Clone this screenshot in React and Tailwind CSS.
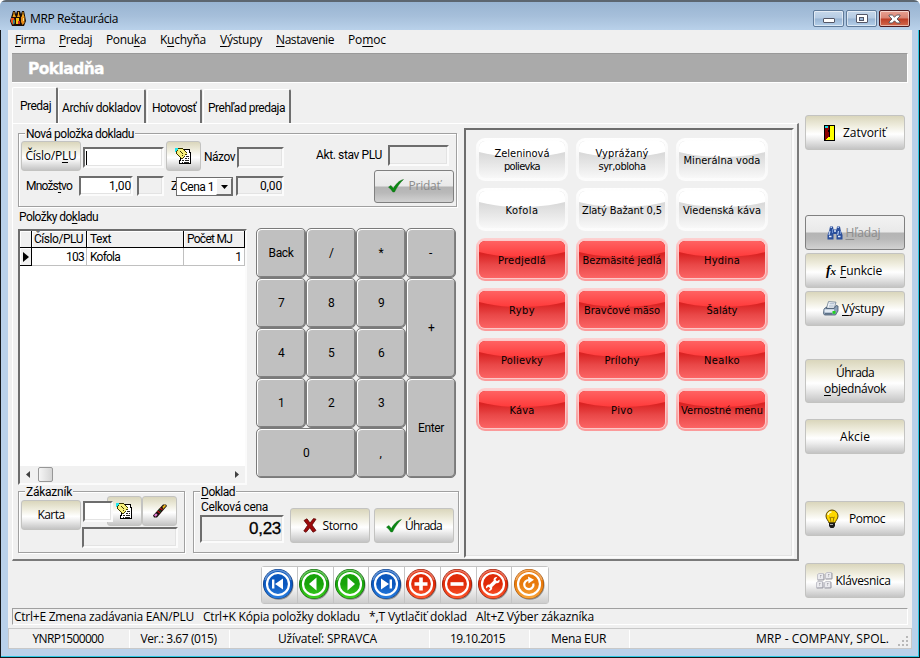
import { useLayoutEffect, useRef, useState } from "react";

// Label with a fixed width, "&" marks the accelerator letter
function Label({ text, w, className = "" }) {
  const ref = useRef(null);
  const [spacing, setSpacing] = useState(0);
  const plain = text.replace("&", "");
  const at = text.indexOf("&");

  useLayoutEffect(() => {
    const natural = ref.current.getBoundingClientRect().width;
    setSpacing((w - natural) / plain.length);
  }, []);

  return (
    <span className={`inline-block shrink-0 whitespace-pre ${className}`} style={{ width: w }}>
      <span ref={ref} className="inline-block" style={{ letterSpacing: spacing }}>
        {at < 0 ? (
          plain
        ) : (
          <>
            {plain.slice(0, at)}
            <span className="underline underline-offset-2">{plain[at]}</span>
            {plain.slice(at + 1)}
          </>
        )}
      </span>
    </span>
  );
}

const SANS = "font-['Roboto','Liberation_Sans',sans-serif] text-[12px] leading-[14px]";

function Button({ children, disabled, className = "" }) {
  const look = disabled
    ? "border-[#808080] text-[#8c8c8c] bg-[linear-gradient(#f2f2f2_0%,#e9e9e9_49%,#b4b4b4_51%,#b9b9b9_70%,#d2d2d2_100%)]"
    : "border-[#c3c3c1] text-black bg-[linear-gradient(#dad6bc_0%,#efedde_30%,#ffffff_55%,#f0f0f0_68%,#c4c4c4_100%)]";
  return (
    <button className={`flex shrink-0 items-center justify-center rounded-[3px] border ${look} ${className}`}>
      {children}
    </button>
  );
}

function Field({ children, white, className = "" }) {
  return (
    <div
      className={`flex shrink-0 items-center justify-end border-2 border-t-[#6d6d6d] border-l-[#6d6d6d] border-r-[#fbfbfb] border-b-[#fbfbfb] shadow-[inset_-1px_-1px_0_#e3e3e3] ${white ? "bg-white" : "bg-[#f0f0f0]"} ${SANS} ${className}`}
    >
      {children}
    </div>
  );
}

function Group({ title, w, className = "", children }) {
  return (
    <div className={`relative border border-[#a0a0a0] shadow-[1px_1px_0_#fff,inset_1px_1px_0_#fff] ${className}`}>
      <div className={`absolute -top-[7px] left-[6px] flex bg-[#f0f0f0] px-px ${SANS}`}>
        <Label text={title} w={w} />
      </div>
      {children}
    </div>
  );
}

/* ---------- icons ---------- */

function AppIcon() {
  return (
    <svg width="16" height="17" viewBox="0 0 16 17" className="shrink-0">
      <path d="M2 4.500L3 1h2l1 3 1-3h3l1 3 1-3h2l.8 3.500L16 11l-2 5H2L0 11z" fill="#1a0c04" />
      <path d="M3.500 2h1v2l1.500 3H2.500L3.500 4zM8 2h1v2l1 3H7l1-3zM12.500 2h1v2l1 3h-3l1-3z" fill="#f3a51d" />
      <path d="M1 8h3l1 4-2 3-2-3z" fill="#e8501a" />
      <path d="M6 8h3v6H6z" fill="#f6c112" />
      <path d="M11 7h3.500v6l-2 2-1.500-3z" fill="#e78b17" />
      <path d="M3 10h1.500v4H3z" fill="#2f9a8b" />
      <path d="M8 11h2v3H8z" fill="#c8282a" />
      <path d="M13 8h1v3h-1z" fill="#ffe27a" />
    </svg>
  );
}

function NotesIcon() {
  return (
    <svg width="17" height="17" viewBox="0 0 17 17" shapeRendering="crispEdges">
      <path d="M5.500 1.500h9v3h1v11h-11v-3h1z" fill="#fff" stroke="#000" />
      <path d="M0 0h4v1H3v1H2v1H1v1H0z" fill="#1ee6ee" />
      <path d="M3 1h5v1h1v1h1v1h1v1h1v2h-2v1H9v1H8v1H6V9H5V8H4V7H3V6H2V3h1z" fill="#f7f07a" />
      <path d="M3 0h5v1H3zM8 1h1v1H8zM9 2h1v1H9zM10 3h1v1h-1zM11 4h1v1h-1zM2 2h1v1H2zM1 3h1v3H1zM2 6h1v1H2zM3 7h1v1H3zM4 8h1v1H4zM5 9h1v1H5zM6 10h2v1H6zM8 9h1v1H8zM9 8h1v1H9zM10 6h2v1h-2zM5 3h1v1H5zM6 4h1v1H6zM7 5h1v1H7zM7 7h1v1H7z" fill="#3b3700" />
      <path d="M11 8h3v1h-3zM10 10h2v1h-2zM13 10h1v1h-1zM7 12h2v1H7zM10 12h4v1h-4zM7 14h1v1H7zM9 14h5v1H9z" transform="translate(0 -.5)" fill="#222" />
    </svg>
  );
}

function EraserIcon() {
  return (
    <svg width="16" height="16" viewBox="0 0 16 16">
      <path d="M1 12.500L11 1.500h3l1 1.500L5 14.500H2z" fill="#1a0f0c" />
      <path d="M10.500 3.500l2.500-2 1 1.500-3 3z" fill="#e8b21a" />
      <path d="M8 5l2.500 2M5.500 8l2.500 2" stroke="#b01818" strokeWidth="1.400" />
      <path d="M6.800 6.500L9 8.500" stroke="#19762c" />
      <path d="M2 12.200l2-2 1.600 1.600-2 2z" fill="#e77bd9" />
    </svg>
  );
}

function CheckIcon() {
  return (
    <svg width="16" height="14" viewBox="0 0 16 14">
      <path d="M.5 8L3 6.500l2.300 3C8 5 11 1.500 15.500.5 12 3.500 9 8 6.500 13H4.800C3.500 11 2.200 9.500.5 8z" fill="#0a8a12" stroke="#055a0a" strokeWidth=".4" />
    </svg>
  );
}

function CrossIcon() {
  return (
    <svg width="14" height="15" viewBox="0 0 14 15">
      <path d="M1 2.500L4 .8l3 4.200L10.500.6 13 1.200 9 7l4 5.500-3 1.700-3.200-4.500L3 14.300.8 13l3.900-5.800z" fill="#9d0b0b" stroke="#5d0404" strokeWidth=".8" />
    </svg>
  );
}

function DoorIcon() {
  return (
    <svg width="11" height="16" viewBox="0 0 11 16" shapeRendering="crispEdges">
      <rect x=".5" y=".5" width="10" height="15" fill="#ffff00" stroke="#000" />
      <path d="M1 1h4v11l-2 1-1 2H1z" fill="#8b0000" />
      <path d="M1 1h3v2H1z" fill="#16dbe6" />
      <path d="M5 1h1v11H5zM4 5h1v2H4z" fill="#000" />
      <path d="M3 13h2v2H3z" fill="#ffff00" />
    </svg>
  );
}

function BinocularsIcon() {
  return (
    <svg width="16" height="14" viewBox="0 0 16 14">
      <path d="M3 .5h3l.5 3h3l.5-3h3l.8 4L15.500 9v4.500H9.500V8h-3v5.500H.5V9l1.700-4.500z" fill="#2b4f9b" />
      <path d="M3.500 1.500h1.500M10.500 1.500H12M3 5l-1 4M11.500 5l-.8 4" stroke="#b8cdf3" strokeWidth="1.200" />
      <path d="M2 10.500h2.500M11 10.500h2.500M7 5h2" stroke="#e6eefc" strokeWidth="1.600" />
      <path d="M5.500 3v4M13.500 5v3" stroke="#6d8fd0" />
    </svg>
  );
}

function PrinterIcon() {
  return (
    <svg width="16" height="15" viewBox="0 0 16 15">
      <path d="M5.500.6l7.500.6-1.800 6H3.500z" fill="#fbfdff" stroke="#64788d" strokeWidth=".8" />
      <path d="M6.500 2.800h5M5.800 5h5" stroke="#7f97b0" strokeWidth=".8" />
      <path d="M1 8l2.500-2v1.500h7.700L13 4.500l2 .5v5l-2.500 4h-11L.5 12.500z" fill="#8ba0b8" stroke="#44586f" strokeWidth=".8" />
      <path d="M1.500 8.300h9.500v3.200H1.500z" fill="#e3ebf3" />
      <path d="M9.500 10h3v2.800h-3z" fill="#1fd51f" />
      <path d="M2 12.800h7" stroke="#4b5e74" />
    </svg>
  );
}

function BulbIcon() {
  return (
    <svg width="14" height="20" viewBox="0 0 14 20">
      <path d="M7 1a6 6 0 0 0-6 6c0 3 2.500 4.500 3 7h6c.5-2.500 3-4 3-7a6 6 0 0 0-6-6z" fill="#ffd800" stroke="#5a4500" />
      <path d="M3 6c.3-2 2-3 3.500-3" stroke="#fffbd0" strokeWidth="1.500" fill="none" />
      <path d="M5 8l1 5M9 8l-1 5M4.500 8l1.200 1L7 8l1.300 1L9.500 8" stroke="#8a6a00" fill="none" strokeWidth=".8" />
      <path d="M4 13.500h6V17l-1.500 2h-3L4 17z" fill="#1c1c1c" />
      <path d="M5 15.500h3" stroke="#a9a9a9" />
    </svg>
  );
}

function KeysIcon() {
  return (
    <svg width="17" height="17" viewBox="0 0 17 17">
      {[[1, 1], [9, 0], [0, 9], [8, 9]].map(([x, y]) => (
        <g key={`${x}-${y}`} transform={`translate(${x} ${y})`}>
          <path d="M.5 1.500L2 .5h4.500L7 6.500l-6.500.6z" fill="#eaeaee" stroke="#b9b9c2" strokeWidth=".8" />
          <path d="M7 1v6H1" stroke="#9696a0" fill="none" strokeWidth=".8" />
          <path d="M3 2.500h1.500M3 4h1" stroke="#8c8c94" strokeWidth=".7" />
        </g>
      ))}
    </svg>
  );
}

const ROUND = {
  blue: ["#2a7fe0", "#0b57bd", "#07377e"],
  green: ["#3fcf1f", "#17a30a", "#0a5c05"],
  red: ["#ff5a30", "#e02a08", "#8a1604"],
  orange: ["#f9a63a", "#e8790a", "#a85204"],
};

function RoundIcon({ color, children }) {
  const [light, base, dark] = ROUND[color];
  return (
    <svg width="32" height="32" viewBox="0 0 32 32" className="mr-[2px] mb-[2px] shrink-0">
      <defs>
        <linearGradient id={`g-${color}`} x1="0" y1="0" x2="0" y2="1">
          <stop offset="0" stopColor={base} />
          <stop offset=".5" stopColor={base} />
          <stop offset="1" stopColor={light} />
        </linearGradient>
      </defs>
      <circle cx="16.800" cy="17" r="14.800" fill="#000" opacity=".35" />
      <circle cx="16" cy="16" r="15" fill={dark} />
      <circle cx="16" cy="16" r="14.400" fill={`url(#g-${color})`} />
      <path d="M3 12a13.500 13.500 0 0 1 26 0" fill="none" stroke="#fff" opacity=".35" strokeWidth="1.500" />
      <circle cx="16" cy="16" r="11" fill="none" stroke="#fff" strokeWidth="2.200" />
      {children}
    </svg>
  );
}

const TOOLBAR = [
  ["blue", <path d="M10 11.500h2.400v9H10zM21 10.500v11L13 16z" fill="#fff" />],
  ["green", <path d="M18.500 9.500v13L11 16z" fill="#fff" />],
  ["green", <path d="M13.500 9.500v13L21 16z" fill="#fff" />],
  ["blue", <path d="M19.600 11.500H22v9h-2.400zM11 10.500v11l8-5.500z" fill="#fff" />],
  ["red", <path d="M14.200 9.500h3.600v4.700h4.700v3.600h-4.700v4.700h-3.600v-4.700H9.500v-3.600h4.700z" fill="#fff" />],
  ["red", <path d="M9.500 14.200h13v3.600h-13z" fill="#fff" />],
  [
    "red",
    <path
      d="M22.500 11.500l-2.500 1.700-1.500-1.500L20.300 9c-2.300-.5-4.200 1.300-3.700 3.700l-3.900 3.900c-2.400-.4-4.200 1.500-3.700 3.800l2.600-1.700 1.600 1.600-1.700 2.500c2.300.5 4.200-1.400 3.700-3.700l3.900-3.900c2.400.5 4.200-1.400 3.400-3.700z"
      fill="#fff"
    />,
  ],
  [
    "orange",
    <>
      <path d="M20.300 15.500a4.600 4.600 0 1 1-4.500-3.500" fill="none" stroke="#fff" strokeWidth="2.200" />
      <path d="M15 8.500l6 3.200-5.500 3.800z" fill="#fff" />
    </>,
  ],
];

/* ---------- window chrome ---------- */

function TitleBar() {
  const box = "flex h-[17px] w-[31px] items-center justify-center rounded-[2px] border shadow-[inset_0_0_0_1px_#ffffff88]";
  const blue = "border-[#5f7a99] bg-[linear-gradient(#c6d7ea_0%,#b5cbe3_48%,#98b4d3_52%,#b5d0ea_100%)]";
  return (
    <div className="flex h-[30px] shrink-0 items-start border-t-2 border-[#5c6670] bg-[linear-gradient(#98b4d2,#a6bfda_50%,#b9d1ea)] pt-[8px] pr-[10px] pl-[10px]">
      <AppIcon />
      <Label text="MRP Reštaurácia" w={88} className="mt-px ml-[4px] text-[12px] leading-[16px]" />
      <div className="ml-auto flex gap-[2px]">
        <div className={`${box} ${blue}`}>
          <div className="mt-[4px] h-[5px] w-[12px] rounded-[1px] border border-[#535666] bg-white" />
        </div>
        <div className={`${box} ${blue}`}>
          <div className="flex h-[9px] w-[12px] items-center justify-center rounded-[1px] border border-[#535666] bg-white">
            <div className="h-[4px] w-[5px] border border-[#535666] bg-[#9db9d8]" />
          </div>
        </div>
        <div className={`${box} border-[#4c1a1f] bg-[linear-gradient(#e8a192_0%,#d98272_48%,#bd3d25_52%,#d2694d_100%)]`}>
          <svg width="13" height="10" viewBox="0 0 13 10">
            <path d="M1 1h3.300l2.200 2.200L8.700 1H12v1L9 5l3 3v1H8.700L6.500 6.800 4.300 9H1V8l3-3-3-3z" fill="#fff" stroke="#53565f" strokeWidth=".9" />
          </svg>
        </div>
      </div>
    </div>
  );
}

const MENU = [
  ["&Firma", 30],
  ["&Predaj", 33],
  ["Ponu&ka", 40],
  ["K&uchyňa", 46],
  ["&Výstupy", 42],
  ["&Nastavenie", 58],
  ["Po&moc", 38],
];

function MenuBar() {
  return (
    <div className="flex h-[23px] shrink-0 items-start gap-[14px] pt-[2px] pl-[7px] text-[12px] leading-[16px]">
      {MENU.map(([text, w]) => (
        <Label key={text} text={text} w={w} />
      ))}
    </div>
  );
}

function Tabs() {
  const tab = "flex h-[34px] items-center rounded-t-[2px] border-t border-l border-r-2 border-t-white border-l-white border-r-[#6e6e6e]";
  return (
    <div className={`flex h-[36px] items-end pl-[4px] ${SANS}`}>
      <div className="flex h-[36px] w-[46px] items-center rounded-t-[2px] border-t border-r-2 border-l border-t-white border-r-[#6e6e6e] border-l-white pl-[7px]">
        <Label text="Predaj" w={31} />
      </div>
      <div className={`${tab} w-[88px] pl-[3px]`}>
        <Label text="Archív dokladov" w={79} className="mt-[2px]" />
      </div>
      <div className={`${tab} ml-px w-[55px] pl-[4px]`}>
        <Label text="Hotovosť" w={44} className="mt-[2px]" />
      </div>
      <div className={`${tab} ml-px w-[88px] pl-[4px]`}>
        <Label text="Prehľad predaja" w={77} className="mt-[2px]" />
      </div>
    </div>
  );
}

/* ---------- sale form ---------- */

function NewItem() {
  return (
    <Group title="Nová položka dokladu" w={108} className="h-[74px] w-[439px] pt-[7px]">
      <div className="flex h-[29px] items-start">
        <Button className="ml-[2px] h-[30px] w-[60px]">
          <Label text="Číslo/P&LU" w={51} className="text-[12px]" />
        </Button>
        <Field white className="mt-[6px] ml-[2px] h-[21px] w-[81px] justify-start">
          <div className="ml-px h-[14px] w-px bg-black" />
        </Field>
        <Button className="ml-[2px] h-[30px] w-[35px]">
          <NotesIcon />
        </Button>
        <Label text="Názov" w={31} className={`mt-[9px] ml-[3px] ${SANS}`} />
        <Field className="mt-[6px] ml-[2px] h-[21px] w-[47px]" />
        <Label text="Akt. stav PLU" w={66} className={`mt-[7px] ml-[32px] ${SANS}`} />
        <Field className="mt-[4px] ml-[6px] h-[21px] w-[61px]" />
      </div>
      <div className="flex items-start">
        <Label text="Množs&tvo" w={46} className={`mt-[9px] ml-[7px] ${SANS}`} />
        <Field white className="mt-[6px] ml-[7px] h-[20px] w-[54px]">
          <Label text="1,00" w={22} />
        </Field>
        <Field className="mt-[6px] ml-[4px] h-[20px] w-[27px]" />
        <Label text="Z" w={5} className={`mt-[9px] ml-[7px] overflow-hidden ${SANS}`} />
        <div className={`mt-[7px] flex h-[19px] w-[57px] items-center border border-[#6d6d6d] bg-white pl-[3px] ${SANS}`}>
          <Label text="Cena 1" w={34} />
          <div className="ml-auto flex h-[17px] w-[16px] items-center justify-center border border-r-[#6d6d6d] border-b-[#6d6d6d] border-t-white border-l-white bg-[#f0f0f0]">
            <svg width="7" height="4" viewBox="0 0 7 4">
              <path d="M0 0h7L3.500 4z" />
            </svg>
          </div>
        </div>
        <Field className="mt-[6px] ml-[3px] h-[20px] w-[48px]">
          <Label text="0,00" w={22} />
        </Field>
        <Button disabled className="ml-[90px] h-[33px] w-[80px] gap-[5px] pb-px">
          <CheckIcon />
          <Label text="Pridať" w={32} className="text-[12px]" />
        </Button>
      </div>
    </Group>
  );
}

function ItemsGrid() {
  const head = "flex items-center border-r border-b border-r-black border-b-black bg-[#f0f0f0] shadow-[inset_1px_1px_0_#fff]";
  const cell = "flex items-center border-r border-b border-[#c0c0c0]";
  return (
    <div className={`mt-px flex h-[256px] w-[229px] flex-col border-2 border-t-[#6d6d6d] border-r-[#fbfbfb] border-b-[#fbfbfb] border-l-[#6d6d6d] bg-white ${SANS}`}>
      <div className="flex h-[17px] shrink-0">
        <div className={`${head} w-[12px]`} />
        <div className={`${head} w-[55px] pl-[2px]`}>
          <Label text="Číslo/PLU" w={49} />
        </div>
        <div className={`${head} w-[97px] pl-[3px]`}>
          <Label text="Text" w={21} />
        </div>
        <div className={`${head} w-[61px] pl-[3px]`}>
          <Label text="Počet MJ" w={45} />
        </div>
      </div>
      <div className="flex h-[18px] shrink-0">
        <div className={`${head} w-[12px] pl-[3px]`}>
          <svg width="6" height="10" viewBox="0 0 6 10">
            <path d="M0 0v10l6-5z" />
          </svg>
        </div>
        <div className={`${cell} w-[55px] justify-end pr-[2px]`}>
          <Label text="103" w={18} />
        </div>
        <div className={`${cell} w-[97px] pl-[3px]`}>
          <Label text="Kofola" w={30} />
        </div>
        <div className={`${cell} w-[61px] justify-end pr-[2px]`}>1</div>
      </div>
      <div className="mt-auto flex h-[17px] items-center justify-between bg-[#f1f1f1] px-[6px]">
        <svg width="4" height="7" viewBox="0 0 4 7">
          <path d="M4 0v7L0 3.500z" fill="#404040" />
        </svg>
        <div className="mr-auto ml-[8px] h-[15px] w-[15px] rounded-[2px] border border-[#979797] bg-[linear-gradient(90deg,#f5f5f5,#d5d5d5)]" />
        <svg width="4" height="7" viewBox="0 0 4 7">
          <path d="M0 0v7l4-3.500z" fill="#404040" />
        </svg>
      </div>
    </div>
  );
}

const KEYS = [
  ["Back", 25, ""],
  ["/", 4, ""],
  ["*", 5, ""],
  ["-", 4, ""],
  ["7", 6, ""],
  ["8", 6, ""],
  ["9", 6, ""],
  ["+", 6, "row-span-2"],
  ["4", 6, ""],
  ["5", 6, ""],
  ["6", 6, ""],
  ["1", 6, ""],
  ["2", 6, ""],
  ["3", 6, ""],
  ["Enter", 26, "row-span-2"],
  ["0", 6, "col-span-2"],
  [",", 3, ""],
];

function Keypad() {
  return (
    <div className={`ml-[9px] grid h-[250px] w-[200px] grid-cols-4 grid-rows-5 ${SANS}`}>
      {KEYS.map(([text, w, span]) => (
        <button
          key={text}
          className={`flex items-center justify-center rounded-[5px] border border-[#7a7a7a] bg-[#c0c0c0] shadow-[inset_1px_1px_0_#fff,inset_-1px_-1px_0_#808080] ${span}`}
        >
          <Label text={text} w={w} />
        </button>
      ))}
    </div>
  );
}

function Customer() {
  return (
    <Group title="Zákazník" w={46} className="h-[62px] w-[167px] pt-[4px]">
      <div className="flex h-[31px] items-start">
        <Button className="mt-[4px] ml-[2px] h-[30px] w-[60px]">
          <Label text="Karta" w={27} className="text-[12px]" />
        </Button>
        <Field white className="z-10 mt-[5px] ml-[2px] h-[21px] w-[30px]" />
        <Button className="-ml-[6px] h-[30px] w-[35px]">
          <NotesIcon />
        </Button>
        <Button className="h-[30px] w-[35px]">
          <EraserIcon />
        </Button>
      </div>
      <Field className="ml-[63px] h-[21px] w-[96px]" />
    </Group>
  );
}

function Receipt() {
  return (
    <Group title="&Doklad" w={34} className="ml-[8px] flex h-[62px] w-[266px] items-start">
      <div className="mt-[8px] ml-[6px] flex w-[84px] flex-col">
        <Label text="Celková cena" w={67} className={`ml-px ${SANS}`} />
        <Field className="mt-px h-[28px] w-[84px] pr-px">
          <Label text="0,23" w={32} className="font-['Liberation_Sans',sans-serif] text-[17px] [-webkit-text-stroke:0.3px_black]" />
        </Field>
      </div>
      <Button className="mt-[16px] ml-[6px] h-[35px] w-[80px] gap-[6px]">
        <CrossIcon />
        <Label text="Storno" w={35} className="text-[12px]" />
      </Button>
      <Button className="mt-[16px] ml-[4px] h-[35px] w-[80px] gap-[3px]">
        <CheckIcon />
        <Label text="Úhrada" w={37} className="text-[12px]" />
      </Button>
    </Group>
  );
}

const DISHES = [
  [["Zeleninová", 55], ["polievka", 36]],
  [["Vyprážaný", 53], ["syr,obloha", 47]],
  [["Minerálna voda", 77]],
  [["Kofola", 33]],
  [["Zlatý Bažant 0,5", 80]],
  [["Viedenská káva", 78]],
];

const CATEGORIES = [
  [["Predjedlá", 48]],
  [["Bezmäsité jedlá", 79]],
  [["Hydina", 36]],
  [["Ryby", 26]],
  [["Bravčové mäso", 76]],
  [["Šaláty", 31]],
  [["Polievky", 42]],
  [["Prílohy", 35]],
  [["Nealko", 36]],
  [["Káva", 25]],
  [["Pivo", 22]],
  [["Vernostné menu", 82]],
];

function GlossButton({ lines, red }) {
  const outer = red
    ? "bg-[linear-gradient(#fdd0d0,#f9a9a9_60%,#fb9a9a)]"
    : "bg-[linear-gradient(#ffffff,#f6f6f6_50%,#fcfcfc)]";
  const inner = red
    ? "shadow-[0_0_0_1px_#fbc9c9] bg-[linear-gradient(#d81818_0%,#da2323_35%,#e94848_65%,#fc6464_100%)]"
    : "bg-[linear-gradient(#d8d8d8_0%,#dadada_35%,#e8e8e8_65%,#f8f8f8_100%)]";
  const gloss = red ? "bg-[linear-gradient(#ff6a6a_60%,#ff3a3a)]" : "bg-white";
  return (
    <button className={`h-[43px] w-[92px] rounded-[9px] p-[3px] ${outer}`}>
      <div
        className={`relative flex h-[37px] w-[86px] flex-col items-center justify-center overflow-hidden rounded-[6px] ${lines.length === 1 ? "pt-[2px]" : ""} ${inner}`}
      >
        <div className={`absolute -top-[32px] -left-[27px] h-[48px] w-[140px] rounded-[50%] ${gloss}`} />
        {lines.map(([text, w]) => (
          <Label key={text} text={text} w={w} className="relative font-['DejaVu_Sans_Condensed','DejaVu_Sans',sans-serif] text-[11px] leading-[13px]" />
        ))}
      </div>
    </button>
  );
}

function MenuBoard() {
  return (
    <div className="mt-[4px] ml-[5px] h-[430px] w-[330px] border-2 border-t-[#6d6d6d] border-r-[#fbfbfb] border-b-[#fbfbfb] border-l-[#6d6d6d] pt-[8px] pl-[10px] shadow-[inset_-1px_-1px_0_#e3e3e3]">
      <div className="grid grid-cols-[repeat(3,92px)] gap-x-[8px] gap-y-[7px]">
        {DISHES.map((lines) => (
          <GlossButton key={lines[0][0]} lines={lines} />
        ))}
        {CATEGORIES.map((lines) => (
          <GlossButton key={lines[0][0]} lines={lines} red />
        ))}
      </div>
    </div>
  );
}

function SideButtons() {
  return (
    <div className="ml-[6px] flex w-[100px] flex-col pt-[33px] text-[12px] leading-[16px]">
      <Button className="h-[35px] gap-[8px]">
        <DoorIcon />
        <Label text="Zatvoriť" w={43} />
      </Button>
      <Button disabled className="mt-[65px] h-[35px] gap-[3px] pr-[3px]">
        <BinocularsIcon />
        <Label text="&Hľadaj" w={35} />
      </Button>
      <Button className="mt-[3px] h-[35px] gap-[4px] pr-[2px]">
        <span className="font-['Liberation_Serif',serif] text-[14px] leading-[14px] font-bold italic">
          f<span className="text-[11px]">x</span>
        </span>
        <Label text="&Funkcie" w={42} />
      </Button>
      <Button className="mt-[3px] h-[35px] gap-[3px] pr-[3px]">
        <PrinterIcon />
        <Label text="&Výstupy" w={42} />
      </Button>
      <Button className="mt-[33px] h-[44px] flex-col">
        <Label text="Úhrada" w={38} />
        <Label text="&objednávok" w={62} />
      </Button>
      <Button className="mt-[16px] h-[35px]">
        <Label text="Akcie" w={30} />
      </Button>
      <Button className="mt-[47px] h-[35px] gap-[10px]">
        <BulbIcon />
        <Label text="Pomoc" w={36} />
      </Button>
      <Button className="mt-[27px] h-[35px] gap-[3px] pr-[4px]">
        <KeysIcon />
        <Label text="Klávesnica" w={55} />
      </Button>
    </div>
  );
}

function StatusBar() {
  const cell = "flex justify-center border-r border-r-white pr-[2px]";
  return (
    <div className="mt-[3px] flex h-[21px] shrink-0 border border-[#c8c8c8] pt-px text-[12px] leading-[18px]">
      <div className={`${cell} w-[121px]`}>
        <Label text="YNRP1500000" w={71} />
      </div>
      <div className={`${cell} w-[100px]`}>
        <Label text="Ver.: 3.67 (015)" w={76} />
      </div>
      <div className={`${cell} w-[200px] pr-[4px]`}>
        <Label text="Užívateľ: SPRAVCA" w={99} />
      </div>
      <div className={`${cell} w-[100px] pr-[4px]`}>
        <Label text="19.10.2015" w={55} />
      </div>
      <div className={`${cell} w-[100px]`}>
        <Label text="Mena EUR" w={55} />
      </div>
      <Label text="MRP - COMPANY, SPOL." w={133} className="ml-auto" />
      <svg width="12" height="12" viewBox="0 0 12 12" className="mt-[6px] mr-px ml-[9px]">
        <path d="M8 0h2v2H8zM8 4h2v2H8zM4 4h2v2H4zM8 8h2v2H8zM4 8h2v2H4zM0 8h2v2H0z" fill="#b8b8b8" />
      </svg>
    </div>
  );
}

const HINTS = [
  ["Ctrl+E Zmena zadávania EAN/PLU", 180],
  ["Ctrl+K Kópia položky dokladu", 157],
  ["*,T Vytlačiť doklad", 98],
  ["Alt+Z Výber zákazníka", 118],
];

export default function App() {
  return (
    <div className="flex h-[658px] w-[920px] flex-col overflow-hidden rounded-t-[6px] bg-[#b9d1ea] font-['Open_Sans','Noto_Sans',sans-serif] text-black">
      <TitleBar />
      <div className="flex h-[628px] border-r border-b border-l border-[#15181c]">
        <div className="flex h-[627px] flex-1 flex-col border-r border-b border-[#2cc8e4] pr-[6px] pl-[7px]">
          <div className="flex h-[619px] w-[904px] flex-col bg-[#f0f0f0]">
            <MenuBar />
            <div className="ml-[4px] flex h-[30px] w-[896px] shrink-0 items-center border-t border-r border-b border-t-[#999] border-r-white border-b-white bg-[#aaaaaa] pt-[2px] pl-[16px]">
              <Label text="Pokladňa" w={76} className="font-['DejaVu_Sans',sans-serif] text-[15.5px] leading-[18px] font-bold text-white [-webkit-text-stroke:0.3px_white]" />
            </div>
            <div className="-mt-px flex h-[522px] shrink-0">
              <div className="flex w-[791px] flex-col pt-[5px]">
                <Tabs />
                <div className="ml-[4px] flex h-[438px] w-[787px] shrink-0 border-t border-r-2 border-b-2 border-l border-t-white border-r-[#7a7a7a] border-b-[#7a7a7a] border-l-white">
                  <div className="flex w-[446px] flex-col pt-[9px] pl-[5px]">
                    <NewItem />
                    <Label text="Položky do&kladu" w={79} className={`mt-[3px] ml-px ${SANS}`} />
                    <div className="mt-[4px] flex h-[257px]">
                      <ItemsGrid />
                      <Keypad />
                    </div>
                    <div className="mt-[6px] flex">
                      <Customer />
                      <Receipt />
                    </div>
                  </div>
                  <MenuBoard />
                </div>
                <div className="mt-[5px] ml-[253px] flex h-[38px] w-[288px] shrink-0 rounded-[3px] border border-[#c4c4c4]">
                  {TOOLBAR.map(([color, glyph], i) => (
                    <button
                      key={i}
                      className="flex w-[36px] items-center justify-center border-r border-r-[#c4c4c4] bg-[linear-gradient(#ffffff_40%,#ededed_65%,#cdcdcd)] last:border-r-0"
                    >
                      <RoundIcon color={color}>{glyph}</RoundIcon>
                    </button>
                  ))}
                </div>
              </div>
              <SideButtons />
            </div>
            <div className="mt-[4px] ml-[4px] flex h-[17px] w-[896px] shrink-0 gap-[9px] border border-t-[#a0a0a0] border-r-white border-b-white border-l-[#a0a0a0] pl-px text-[12px] leading-[16px]">
              {HINTS.map(([text, w]) => (
                <Label key={text} text={text} w={w} />
              ))}
            </div>
            <StatusBar />
          </div>
        </div>
      </div>
    </div>
  );
}
